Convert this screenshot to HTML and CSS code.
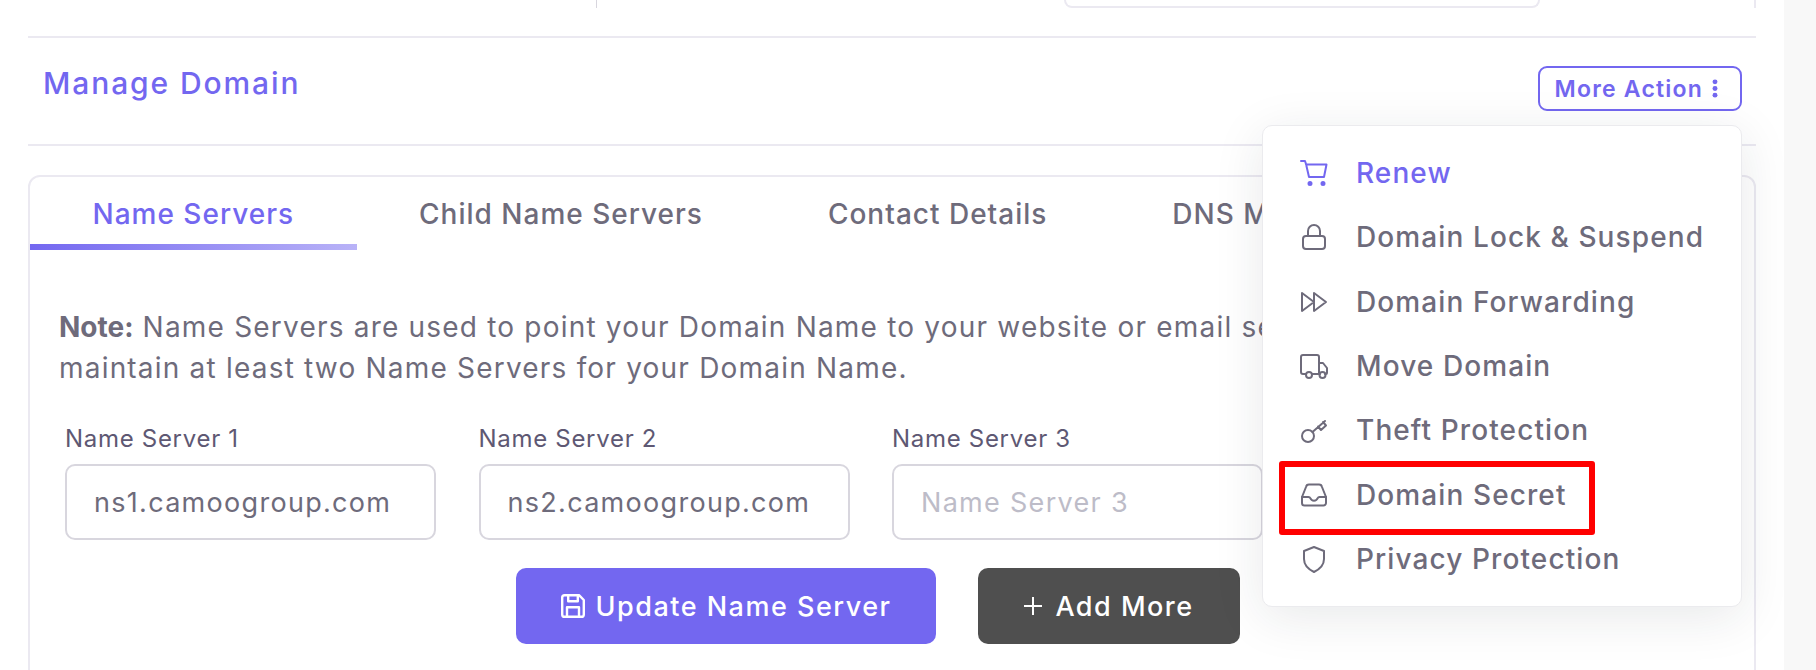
FILE: index.html
```html
<!DOCTYPE html>
<html lang="en">
<head>
<meta charset="utf-8">
<title>Manage Domain</title>
<link rel="stylesheet" href="styles.css">
</head>
<body>
<main class="panel">
  <div class="top-strip">
    <span class="strip-divider"></span>
    <span class="strip-box"></span>
    <span class="strip-tick"></span>
  </div>
  <header class="manage-head">
    <h1 class="manage-title">Manage Domain</h1>
    <button class="more-btn" type="button">More Action
      <svg class="more-dots" viewBox="0 0 6 20"><circle cx="3" cy="3" r="2.600"/><circle cx="3" cy="10" r="2.600"/><circle cx="3" cy="17" r="2.600"/></svg>
    </button>
  </header>
  <section class="card">
    <nav class="tabs">
      <a class="tab tab-active">Name Servers</a>
      <a class="tab">Child Name Servers</a>
      <a class="tab">Contact Details</a>
      <a class="tab">DNS Management</a>
    </nav>
    <div class="card-body">
      <p class="note"><b>Note:</b> Name Servers are used to point your Domain Name to your website or email services. You must<br>maintain at least two Name Servers for your Domain Name.</p>
      <div class="fields">
        <label class="field"><span class="field-label">Name Server 1</span><input class="field-input" value="ns1.camoogroup.com"></label>
        <label class="field"><span class="field-label">Name Server 2</span><input class="field-input" value="ns2.camoogroup.com"></label>
        <label class="field"><span class="field-label">Name Server 3</span><input class="field-input" placeholder="Name Server 3"></label>
      </div>
      <div class="actions">
        <button class="btn btn-primary" type="button">
          <svg class="btn-icon" viewBox="2 2 20 20"><path d="M5 3h12l4 4v12a2 2 0 0 1-2 2H5a2 2 0 0 1-2-2V5a2 2 0 0 1 2-2z"/><path d="M8 3v5h8V3M7 21v-8h10v8"/></svg>
          Update Name Server</button>
        <button class="btn btn-dark" type="button">
          <svg class="btn-plus" viewBox="0 0 18 18"><path d="M9 0v18M0 9h18"/></svg>
          Add More</button>
      </div>
    </div>
  </section>
  <div class="menu">
    <a class="menu-item menu-item-active"><svg class="menu-icon" viewBox="0 0 28 28"><path d="M1 2h4l1 3 3 13h15l2.500-12.500H6"/><circle cx="10" cy="24.500" r="1.500" class="dot"/><circle cx="23" cy="24.500" r="1.500" class="dot"/></svg>Renew</a>
    <a class="menu-item"><svg class="menu-icon" viewBox="0 0 28 28"><rect x="3" y="13" width="22" height="13" rx="3"/><path d="M8 13V8a6 6 0 0 1 12 0v5"/></svg>Domain Lock &amp; Suspend</a>
    <a class="menu-item"><svg class="menu-icon" viewBox="0 0 28 28"><path d="M2 5l12 9-12 9zM14 5l12 9-12 9z"/></svg>Domain Forwarding</a>
    <a class="menu-item"><svg class="menu-icon" viewBox="0 0 28 28"><path d="M6 22H3a2 2 0 0 1-2-2V5a2 2 0 0 1 2-2h14a2 2 0 0 1 2 2v17h-7M19 11h4l4 5v5a1 1 0 0 1-1 1h-1M19 22h1"/><circle cx="9" cy="23" r="3"/><circle cx="22.500" cy="23" r="3"/></svg>Move Domain</a>
    <a class="menu-item"><svg class="menu-icon" viewBox="0 0 28 28"><circle cx="8" cy="20" r="6"/><path d="M12.500 16 25 5M18 10.500l3 3.500 5-4.500-3-3.500"/></svg>Theft Protection</a>
    <a class="menu-item"><svg class="menu-icon" viewBox="0 0 28 28"><path d="M2 16 6 6a3 3 0 0 1 3-2.500h10A3 3 0 0 1 22 6l4 10v6a2.500 2.500 0 0 1-2.500 2.500h-19A2.500 2.500 0 0 1 2 22z"/><path d="M2 16h6.500a2 2 0 0 1 1.800 1.200 4 4 0 0 0 7.400 0 2 2 0 0 1 1.800-1.200H26"/></svg>Domain Secret</a>
    <a class="menu-item"><svg class="menu-icon" viewBox="0 0 28 28"><path d="M14 2 24 6v8c0 6-4 10-10 13C8 24 4 20 4 14V6z"/></svg>Privacy Protection</a>
  </div>
  <div class="annotation"></div>
</main>
</body>
</html>
```

FILE: styles.css
```css
* { box-sizing: border-box; }
html, body { margin: 0; height: 100%; overflow: hidden; }
body {
  background: #f8f8f8;
  font-family: Inter, "Liberation Sans", sans-serif;
  color: #6e6b7b;
}
.panel {
  position: relative;
  width: 1784px;
  height: 670px;
  background: #fff;
  padding: 0 28px;
  overflow: hidden;
}
.top-strip {
  height: 38px;
  border-bottom: 2px solid #ebe9f1;
  display: flex;
  padding-left: 568px;
}
.strip-divider { width: 1px; height: 8px; background: #d8d6de; }
.strip-box {
  width: 476px;
  height: 8px;
  margin-left: 467px;
  border: 2px solid #ebe9f1;
  border-top: 0;
  border-radius: 0 0 12px 12px;
}
.strip-tick { width: 2px; height: 8px; margin-left: 214px; background: #ebe9f1; }
.manage-head {
  height: 108px;
  border-bottom: 2px solid #ebe9f1;
  display: flex;
  justify-content: space-between;
  align-items: flex-start;
  padding: 27px 14px 0 15px;
}
.manage-title {
  margin: 0;
  font-size: 30px;
  line-height: 36px;
  font-weight: 500;
  letter-spacing: 1.9px;
  color: #7367f0;
}
.more-btn {
  display: flex;
  align-items: center;
  gap: 9px;
  height: 45px;
  margin-top: 1px;
  padding: 0 22px 0 15px;
  background: #fff;
  border: 2px solid #7367f0;
  border-radius: 9px;
  color: #7367f0;
  font: 600 23px Inter, "Liberation Sans", sans-serif;
  letter-spacing: 1.2px;
  white-space: nowrap;
}
.more-dots { width: 6px; height: 19px; fill: #7367f0; }
.card {
  margin-top: 29px;
  border: 2px solid #ebe9f1;
  border-radius: 12px 12px 0 0;
  height: 520px;
}
.tabs { display: flex; height: 73px; }
.tab {
  height: 73px;
  padding: 0 62.5px;
  font-size: 28px;
  line-height: 75px;
  font-weight: 500;
  letter-spacing: 1px;
  white-space: nowrap;
}
.tab-active {
  color: #7367f0;
  position: relative;
}
.tab-active::after {
  content: "";
  position: absolute;
  left: 0;
  right: 0;
  bottom: 0;
  height: 6px;
  background: linear-gradient(90deg, #7367f0, rgba(115, 103, 240, .5));
}
.card-body { padding: 57px 0 0 29px; }
.note {
  margin: 0;
  font-size: 28px;
  line-height: 41px;
  letter-spacing: 1.2px;
  white-space: nowrap;
}
.note b { font-weight: 700; letter-spacing: 0; }
.fields {
  display: flex;
  gap: 42.5px;
  margin-top: 36px;
  padding-left: 6px;
}
.field { display: block; width: 371px; }
.field-label {
  display: block;
  font-size: 24px;
  line-height: 28px;
  letter-spacing: .7px;
  margin-bottom: 11px;
  color: #5e5873;
}
.field-input {
  display: block;
  width: 100%;
  height: 76px;
  padding: 0 27px;
  border: 2px solid #d8d6de;
  border-radius: 10px;
  background: #fff;
  color: #6e6b7b;
  font: 400 27px Inter, "Liberation Sans", sans-serif;
  letter-spacing: 1.3px;
  outline: none;
}
.field-input::placeholder { color: #bdbcc8; opacity: 1; }
.actions {
  display: flex;
  gap: 42px;
  margin-top: 28px;
  padding-left: 457px;
}
.btn {
  display: flex;
  align-items: center;
  justify-content: center;
  height: 76px;
  border: 0;
  border-radius: 10px;
  color: #fff;
  font: 500 27px Inter, "Liberation Sans", sans-serif;
  letter-spacing: 1.5px;
  white-space: nowrap;
}
.btn-primary { width: 420px; background: #7367f0; gap: 11px; }
.btn-dark { width: 262px; background: #4f4f4f; gap: 13px; }
.btn-icon { width: 24px; height: 24px; fill: none; stroke: #fff; stroke-width: 2; stroke-linejoin: round; }
.btn-plus { width: 18px; height: 18px; fill: none; stroke: #fff; stroke-width: 2; }
.menu {
  position: absolute;
  left: 1262px;
  top: 125px;
  width: 480px;
  height: 482px;
  padding: 15px 0 0 37px;
  background: #fff;
  border: 1px solid #ebebee;
  border-radius: 10px;
  box-shadow: 0 10px 50px rgba(34, 41, 47, .1);
}
.menu-item {
  display: flex;
  align-items: center;
  gap: 28px;
  height: 64.3px;
  font-size: 28px;
  font-weight: 500;
  letter-spacing: 1.1px;
  white-space: nowrap;
}
.menu-item-active { color: #7367f0; }
.menu-icon {
  flex: none;
  width: 28px;
  height: 28px;
  fill: none;
  stroke: currentColor;
  stroke-width: 2;
  stroke-linejoin: round;
  stroke-linecap: round;
}
.menu-icon .dot { fill: currentColor; }
.annotation {
  position: absolute;
  left: 1279px;
  top: 461px;
  width: 316px;
  height: 74px;
  border: 6px solid #f00;
  border-radius: 3px;
}
```
